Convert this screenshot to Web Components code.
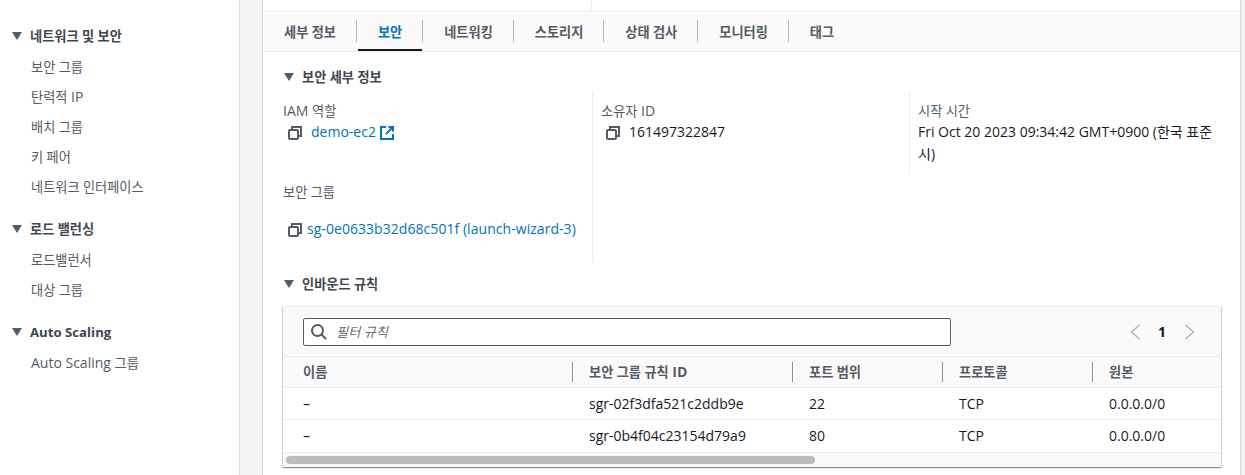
<!DOCTYPE html>
<html lang="ko">
<head>
<meta charset="utf-8">
<title>EC2 보안</title>
<style>
  html, body { margin: 0; height: 100%; overflow: hidden; }
  body {
    font: 14px/18px "Open Sans", "Noto Sans CJK KR", sans-serif;
    color: #16191f;
    background: #f2f3f3;
  }
</style>
</head>
<body>
<template id="copy-tpl">
  <style>
    :host { display: inline-flex; width: 14px; height: 14px; flex: none; }
    svg { width: 14px; height: 14px; fill: none; stroke: #545b64; stroke-width: 2; }
  </style>
  <svg viewBox="0 0 14 14"><path d="M4 4V1h9v9h-3"/><rect x="1" y="4" width="9" height="9" rx="1"/></svg>
</template>
<template id="caret-tpl">
  <style>
    :host { display: inline-flex; width: 10px; height: 8px; flex: none; }
    svg { width: 10px; height: 8px; fill: #545b64; }
  </style>
  <svg viewBox="0 0 10 8"><path d="M0 0h10L5 8z"/></svg>
</template>

<aws-console>
  <side-nav slot="nav">
    <nav-group label="네트워크 및 보안">
      <nav-item><ko-text>보안 그룹</ko-text></nav-item>
      <nav-item><ko-text>탄력적</ko-text> IP</nav-item>
      <nav-item><ko-text>배치 그룹</ko-text></nav-item>
      <nav-item><ko-text>키 페어</ko-text></nav-item>
      <nav-item><ko-text>네트워크 인터페이스</ko-text></nav-item>
    </nav-group>
    <nav-group label="로드 밸런싱">
      <nav-item><ko-text>로드밸런서</ko-text></nav-item>
      <nav-item><ko-text>대상 그룹</ko-text></nav-item>
    </nav-group>
    <nav-group label="Auto Scaling">
      <nav-item>Auto Scaling <ko-text>그룹</ko-text></nav-item>
    </nav-group>
  </side-nav>
  <detail-panel slot="main">
    <tab-bar>
      <tab-item><ko-text>세부 정보</ko-text></tab-item>
      <tab-item active><ko-text>보안</ko-text></tab-item>
      <tab-item><ko-text>네트워킹</ko-text></tab-item>
      <tab-item><ko-text>스토리지</ko-text></tab-item>
      <tab-item><ko-text>상태 검사</ko-text></tab-item>
      <tab-item><ko-text>모니터링</ko-text></tab-item>
      <tab-item last><ko-text>태그</ko-text></tab-item>
    </tab-bar>
    <section-head style="margin-top:16px"><ko-text>보안 세부 정보</ko-text></section-head>
    <security-details></security-details>
    <section-head style="margin-top:13px"><ko-text>인바운드 규칙</ko-text></section-head>
    <rules-table></rules-table>
  </detail-panel>
</aws-console>

<script>
function fromTemplate(el, id) {
  el.attachShadow({mode: "open"});
  el.shadowRoot.appendChild(document.getElementById(id).content.cloneNode(true));
}

class CopyIcon extends HTMLElement {
  constructor() { super(); fromTemplate(this, "copy-tpl"); }
}
class CaretIcon extends HTMLElement {
  constructor() { super(); fromTemplate(this, "caret-tpl"); }
}

// the Korean glyphs run a little smaller than the latin ones next to them
class KoText extends HTMLElement {
  constructor() {
    super();
    this.attachShadow({mode: "open"});
    this.shadowRoot.innerHTML = `<style>:host { font-size: 13.2px; }</style><slot></slot>`;
  }
}

class AwsConsole extends HTMLElement {
  constructor() {
    super();
    this.attachShadow({mode: "open"});
    this.shadowRoot.innerHTML = `
      <style>
        :host { display: grid; grid-template-columns: 240px 1fr; height: 475px; overflow: hidden; }
        .main { padding: 0 4px 0 22px; min-width: 0; }
      </style>
      <slot name="nav"></slot>
      <div class="main"><slot name="main"></slot></div>
    `;
  }
}

class SideNav extends HTMLElement {
  constructor() {
    super();
    this.attachShadow({mode: "open"});
    this.shadowRoot.innerHTML = `
      <style>
        :host { display: block; background: #fff; border-right: 1px solid #d5dbdb; padding-top: 27px; box-sizing: border-box; height: 475px; }
      </style>
      <slot></slot>
    `;
  }
}

class NavGroup extends HTMLElement {
  constructor() {
    super();
    this.attachShadow({mode: "open"});
    this.shadowRoot.innerHTML = `
      <style>
        :host { display: block; margin-bottom: 24px; }
        .head { display: flex; align-items: center; gap: 8px; height: 18px; padding-left: 12px; font-weight: 700; color: #414750; }
        ::slotted(nav-item) { margin-top: 12px; }
        ::slotted(nav-item:first-child) { margin-top: 13px; }
      </style>
      <div class="head"><caret-icon></caret-icon><ko-text class="label"></ko-text></div>
      <slot></slot>
    `;
    this.shadowRoot.querySelector(".label").textContent = this.getAttribute("label");
  }
}

class NavItem extends HTMLElement {
  constructor() {
    super();
    this.attachShadow({mode: "open"});
    this.shadowRoot.innerHTML = `
      <style>:host { display: block; padding-left: 31px; color: #545b64; }</style>
      <slot></slot>
    `;
  }
}

class DetailPanel extends HTMLElement {
  constructor() {
    super();
    this.attachShadow({mode: "open"});
    this.shadowRoot.innerHTML = `
      <style>
        :host { display: block; background: #fff; height: 475px; box-sizing: border-box; border-left: 1px solid #d5dbdb; border-right: 1px solid #d5dbdb; }
        .strip { height: 11px; display: grid; grid-template-columns: 329px 1fr; }
        .strip i { border-right: 1px solid #eaeded; }
      </style>
      <div class="strip"><i></i></div>
      <slot></slot>
    `;
  }
}

class TabBar extends HTMLElement {
  constructor() {
    super();
    this.attachShadow({mode: "open"});
    this.shadowRoot.innerHTML = `
      <style>
        :host { display: flex; align-items: center; height: 41px; box-sizing: border-box; background: #fafafa; border-top: 1px solid #eaeded; border-bottom: 1px solid #eaeded; }
      </style>
      <slot></slot>
    `;
  }
}

class TabItem extends HTMLElement {
  constructor() {
    super();
    this.attachShadow({mode: "open"});
    this.shadowRoot.innerHTML = `
      <style>
        :host { display: flex; align-items: center; height: 39px; position: relative; padding: 0 21px; font-weight: 700; color: #545b64; }
        :host::after { content: ""; position: absolute; right: 0; top: 8px; height: 22px; width: 1px; background: #aab7b8; }
        :host([last])::after { display: none; }
        :host([active]) { color: #0073bb; }
        :host([active])::before { content: ""; position: absolute; left: 1px; right: 1px; bottom: 0; height: 2px; background: #16191f; }
      </style>
      <slot></slot>
    `;
  }
}

class SectionHead extends HTMLElement {
  constructor() {
    super();
    this.attachShadow({mode: "open"});
    this.shadowRoot.innerHTML = `
      <style>
        :host { display: flex; align-items: center; gap: 8px; height: 18px; padding-left: 21px; font-weight: 700; color: #414750; }
      </style>
      <caret-icon></caret-icon><slot></slot>
    `;
  }
}

class SecurityDetails extends HTMLElement {
  constructor() {
    super();
    this.attachShadow({mode: "open"});
    this.shadowRoot.innerHTML = `
      <style>
        :host { display: grid; grid-template-columns: 329px 317px 1fr; margin-top: 6px; align-items: start; }
        .col { padding-left: 20px; height: 170px; box-sizing: border-box; }
        .col + .col { border-left: 1px solid #eaeded; padding-left: 8px; }
        .col.time { height: 82px; padding-right: 18px; }
        .label { color: #545b64; height: 18px; margin-top: 10px; }
        .val { display: flex; align-items: center; gap: 9px; height: 20px; padding-left: 5px; margin-top: 2px; }
        .val copy-icon { margin-top: 2px; }
        a { color: #0073bb; text-decoration: none; }
        .ext { width: 14px; height: 14px; flex: none; fill: none; stroke: #0073bb; stroke-width: 2; margin: 1px 0 0 -5px; }
        .sg { margin-top: 41px; }
        .sgval { margin-top: 18px; gap: 5px; letter-spacing: .05px; }
        .plain { display: block; height: auto; padding: 0; line-height: 22px; margin-top: 1px; }
      </style>
      <div class="col">
        <div class="label">IAM <ko-text>역할</ko-text></div>
        <div class="val"><copy-icon></copy-icon><a>demo-ec2</a>
          <svg class="ext" viewBox="0 0 14 14"><path d="M6 1H1v12h12V8"/><path d="M8.500 1H13v4.500"/><path d="M13 1L6 8"/></svg></div>
        <div class="label sg"><ko-text>보안 그룹</ko-text></div>
        <div class="val sgval"><copy-icon></copy-icon><a>sg-0e0633b32d68c501f (launch-wizard-3)</a></div>
      </div>
      <div class="col">
        <div class="label"><ko-text>소유자</ko-text> ID</div>
        <div class="val"><copy-icon></copy-icon><span>161497322847</span></div>
      </div>
      <div class="col time">
        <div class="label"><ko-text>시작 시간</ko-text></div>
        <div class="val plain">Fri Oct 20 2023 09:34:42 GMT+0900 (한국 표준시)</div>
      </div>
    `;
  }
}

class RulesTable extends HTMLElement {
  constructor() {
    super();
    this.attachShadow({mode: "open"});
    this.shadowRoot.innerHTML = `
      <style>
        :host { display: block; margin: 13px 19px 0 20px; background: #fafafa; box-shadow: 0 1px 1px 0 rgba(0,28,36,.3), 1px 1px 1px 0 rgba(0,28,36,.15), -1px 1px 1px 0 rgba(0,28,36,.15); border-top: 1px solid #eaeded; }
        .tools { display: flex; align-items: center; height: 50px; box-sizing: border-box; padding: 0 26px 0 20px; border-bottom: 1px solid #eaeded; }
        .filter { display: flex; align-items: center; gap: 9px; width: 648px; height: 28px; box-sizing: border-box; background: #fff; border: 1px solid #545b64; border-radius: 2px; padding-left: 7px; font-style: italic; color: #687078; }
        .filter svg { width: 16px; height: 16px; fill: none; stroke: #545b64; stroke-width: 2; }
        .pager { margin-left: auto; display: flex; align-items: center; gap: 18px; font-weight: 700; }
        .pager span + svg { margin-left: 1px; }
        .pager svg { width: 10px; height: 16px; fill: none; stroke: #aab7b8; stroke-width: 1.500; }
        .row { display: grid; grid-template-columns: 289px 220px 150px 150px 1fr; box-sizing: border-box; border-bottom: 1px solid #eaeded; background: #fff; height: 32px; align-items: center; }
        .row.r2 { height: 33px; }
        .row.h { background: #fafafa; height: 31px; font-weight: 700; color: #545b64; }
        .row > div { padding-left: 17px; box-sizing: border-box; }
        .row > div:first-child { padding-left: 20px; }
        .row.h > div { position: relative; }
        .row.h > div + div::before { content: ""; position: absolute; left: 0; top: -1px; height: 20px; width: 1px; background: #879596; }
        .bar { height: 14px; display: flex; align-items: center; }
        .thumb { width: 529px; height: 8px; margin-left: 3px; border-radius: 4px; background: #bcbcbc; }
      </style>
      <div class="tools">
        <div class="filter">
          <svg viewBox="0 0 16 16"><circle cx="6.500" cy="6.500" r="5.500"/><path d="M10.500 10.500L15 15"/></svg>
          <ko-text>필터 규칙</ko-text>
        </div>
        <div class="pager">
          <svg viewBox="0 0 10 16"><path d="M9.500 1L1.500 8l8 7"/></svg>
          <span>1</span>
          <svg viewBox="0 0 10 16"><path d="M.5 1l8 7-8 7"/></svg>
        </div>
      </div>
      <div class="row h"><div><ko-text>이름</ko-text></div><div><ko-text>보안 그룹 규칙</ko-text> ID</div><div><ko-text>포트 범위</ko-text></div><div><ko-text>프로토콜</ko-text></div><div><ko-text>원본</ko-text></div></div>
      <div class="row"><div>–</div><div>sgr-02f3dfa521c2ddb9e</div><div>22</div><div>TCP</div><div>0.0.0.0/0</div></div>
      <div class="row r2"><div>–</div><div>sgr-0b4f04c23154d79a9</div><div>80</div><div>TCP</div><div>0.0.0.0/0</div></div>
      <div class="bar"><div class="thumb"></div></div>
    `;
  }
}

customElements.define("ko-text", KoText);
customElements.define("copy-icon", CopyIcon);
customElements.define("caret-icon", CaretIcon);
customElements.define("aws-console", AwsConsole);
customElements.define("side-nav", SideNav);
customElements.define("nav-group", NavGroup);
customElements.define("nav-item", NavItem);
customElements.define("detail-panel", DetailPanel);
customElements.define("tab-bar", TabBar);
customElements.define("tab-item", TabItem);
customElements.define("section-head", SectionHead);
customElements.define("security-details", SecurityDetails);
customElements.define("rules-table", RulesTable);
</script>
</body>
</html>
